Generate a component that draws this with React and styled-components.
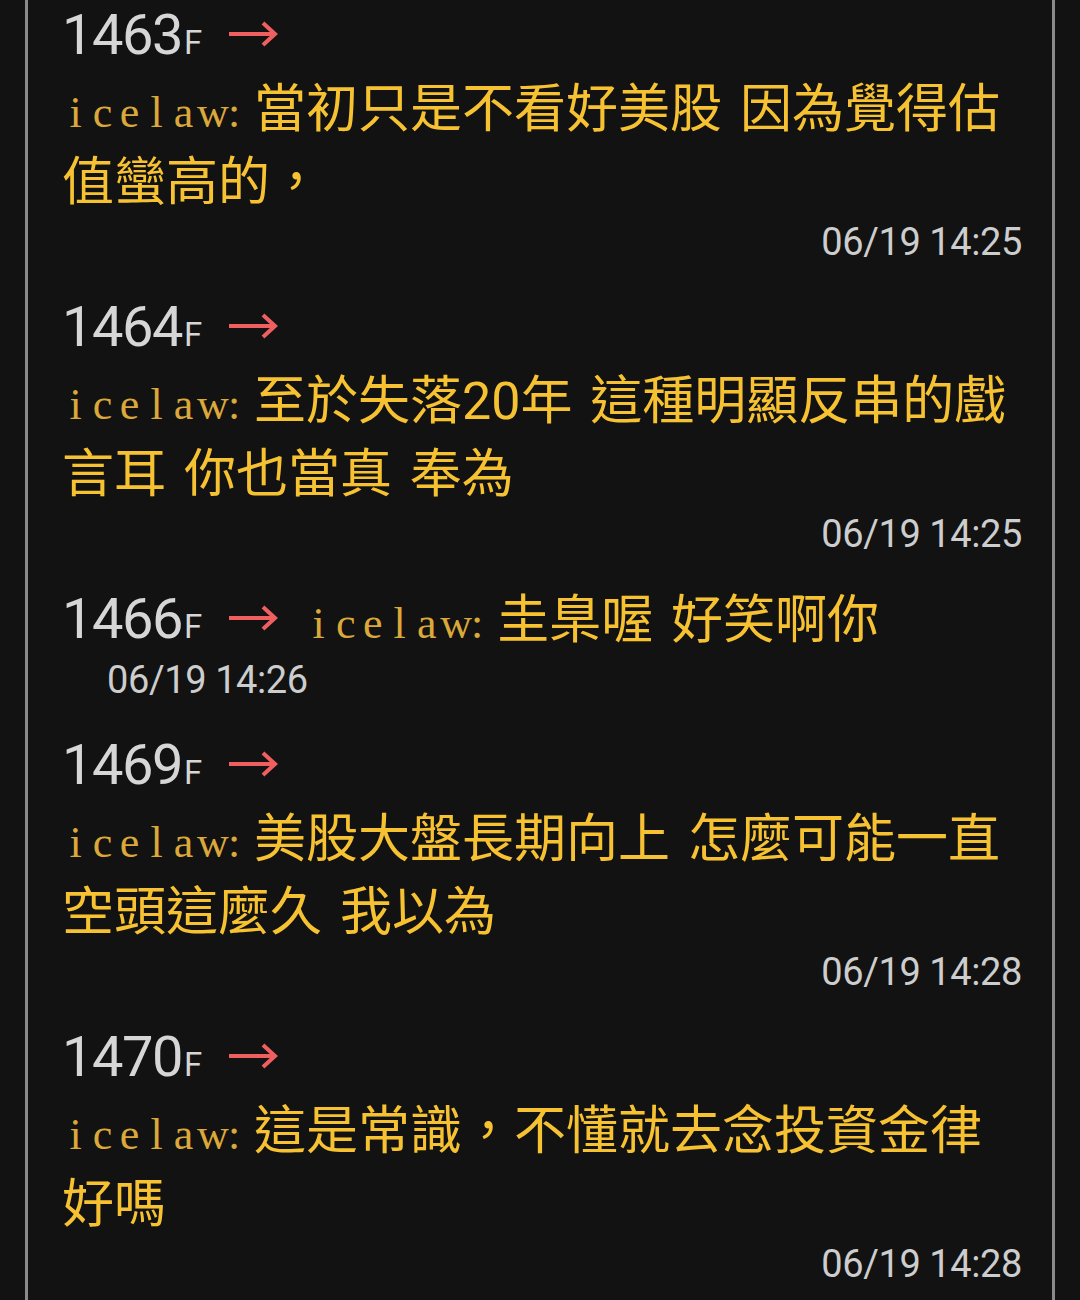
import React from 'react';
import styled, { createGlobalStyle } from 'styled-components';

const GlobalStyle = createGlobalStyle`
  html, body {
    margin: 0;
    padding: 0;
    background: #121212;
    overflow: hidden;
  }
`;

const Frame = styled.div`
  margin-left: 25px;
  width: 1030px;
  min-height: 100vh;
  box-sizing: border-box;
  border-left: 3px solid #8a8a8a;
  border-right: 3px solid #8a8a8a;
  padding: 0 30px 0 34px;
`;

const Comment = styled.div`
  margin-bottom: 26px;
  font-family: Roboto, "Noto Sans CJK TC", sans-serif;
  font-size: 52px;
  line-height: 73px;
  color: #f7c232;
`;

const Floor = styled.span`
  font-family: Roboto, sans-serif;
  font-size: 56px;
  line-height: 1;
  letter-spacing: -1.5px;
  color: #d6d6d6;
`;

const FloorMark = styled.span`
  font-family: Roboto, sans-serif;
  font-size: 33px;
  line-height: 1;
  margin-left: 2px;
  color: #d6d6d6;
`;

const Arrow = styled.svg`
  width: 50px;
  height: 26px;
  margin-left: 26px;
  vertical-align: 7px;
`;

const Body = styled.span`
  display: inline-block;
  max-width: 100%;
  word-spacing: 5px;
  margin-left: ${(p) => (p.$inline ? '27px' : '0')};
`;

// typewriter-style user id: serif glyphs on a fixed 27px pitch
const User = styled.span`
  white-space: nowrap;
  margin-right: 10px;
  font-family: "Liberation Serif", serif;
  font-size: 44px;
  line-height: 1;
  color: #dba83a;
`;

const Cell = styled.span`
  display: inline-block;
  width: ${(p) => (p.$narrow ? '20px' : '27px')};
  text-align: center;
`;

const Time = styled.div`
  font-family: Roboto, sans-serif;
  font-size: 38px;
  line-height: 47px;
  letter-spacing: -0.4px;
  color: #cdcdcd;
  text-align: ${(p) => (p.$inline ? 'left' : 'right')};
  padding-left: ${(p) => (p.$inline ? '45px' : '0')};
`;

const comments = [
  { floor: 1463, text: '當初只是不看好美股 因為覺得估值蠻高的，', time: '06/19 14:25' },
  { floor: 1464, text: '至於失落20年 這種明顯反串的戲言耳 你也當真 奉為', time: '06/19 14:25' },
  { floor: 1466, text: '圭臬喔 好笑啊你', time: '06/19 14:26', inline: true },
  { floor: 1469, text: '美股大盤長期向上 怎麼可能一直空頭這麼久 我以為', time: '06/19 14:28' },
  { floor: 1470, text: '這是常識，不懂就去念投資金律好嗎', time: '06/19 14:28' },
];

const PushArrow = () => (
  <Arrow viewBox="0 0 50 26">
    <path d="M1 13 H47 M35 2 L47 13 L35 24" fill="none" stroke="#ef5f5f" strokeWidth="4" />
  </Arrow>
);

const UserId = ({ name }) => (
  <User>
    {name.split('').map((ch, i) => (
      <Cell key={i}>{ch}</Cell>
    ))}
    <Cell $narrow>:</Cell>
  </User>
);

export default function App() {
  return (
    <>
      <GlobalStyle />
      <Frame>
        {comments.map((c) => (
          <Comment key={c.floor}>
            <Floor>{c.floor}</Floor>
            <FloorMark>F</FloorMark>
            <PushArrow />
            <Body $inline={c.inline}>
              <UserId name="icelaw" />
              {c.text}
            </Body>
            <Time $inline={c.inline}>{c.time}</Time>
          </Comment>
        ))}
      </Frame>
    </>
  );
}
